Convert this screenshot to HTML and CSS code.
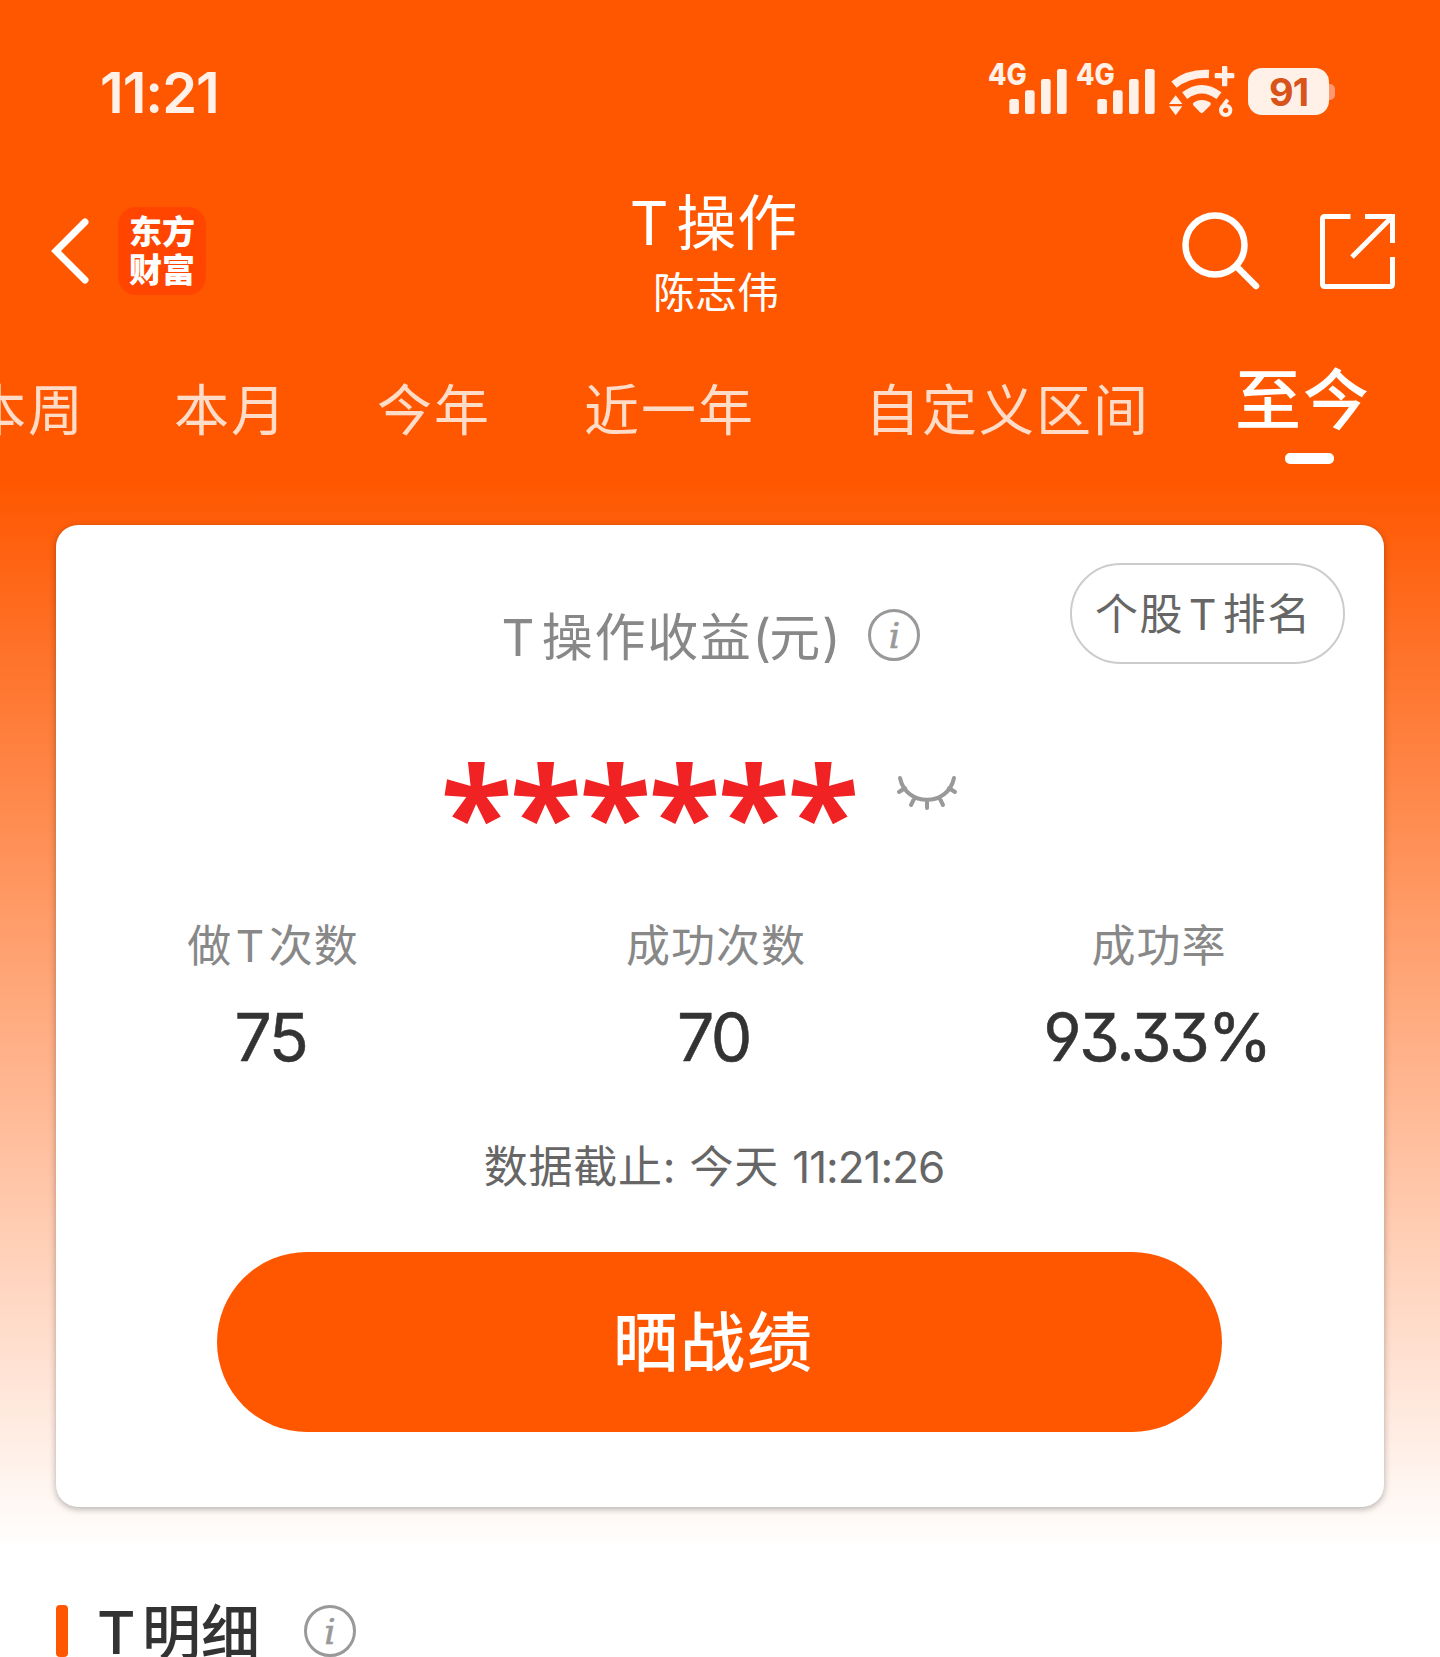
FILE: index.html
```html
<!DOCTYPE html>
<html lang="zh-CN">
<head>
  <meta charset="UTF-8">
  <title>T操作</title>
  <meta name="viewport" content="width=device-width, initial-scale=1.0">
  <link rel="stylesheet" href="styles.css">
</head>
<body>
  <div class="status-bar">
    <span class="time">11:21</span>
    <div class="status-icons">
      <svg class="signal" viewBox="50 36 240 168">
        <text x="50" y="104" textLength="116" lengthAdjust="spacingAndGlyphs">4G</text>
        <rect x="114" y="147" width="29" height="45" rx="7"/>
        <rect x="161" y="121" width="29" height="71" rx="7"/>
        <rect x="209" y="87" width="29" height="105" rx="7"/>
        <rect x="257" y="57" width="29" height="135" rx="7"/>
      </svg>
      <svg class="signal" viewBox="50 36 240 168">
        <text x="50" y="104" textLength="116" lengthAdjust="spacingAndGlyphs">4G</text>
        <rect x="114" y="147" width="29" height="45" rx="7"/>
        <rect x="161" y="121" width="29" height="71" rx="7"/>
        <rect x="209" y="87" width="29" height="105" rx="7"/>
        <rect x="257" y="57" width="29" height="135" rx="7"/>
      </svg>
      <svg class="wifi" viewBox="590 36 204 168">
        <path d="M608 104 Q650 69 713 72" class="arc"/>
        <path d="M640 137 Q691 98 743 137" class="arc"/>
        <path d="M668 157 Q691 143 716 157 Q721 161 717 166 L696 187 Q691 192 686 187 L666 166 Q662 161 668 157 Z"/>
        <path d="M613 136 L633 162 H593 Z M593 169 H633 L613 196 Z"/>
        <path d="M753 48 h12 q3 0 3 3 v18 h18 q3 0 3 3 v10 q0 3 -3 3 h-18 v21 q0 3 -3 3 h-10 q-3 0 -3 -3 v-21 h-19 q-3 0 -3 -3 v-10 q0 -3 3 -3 h19 v-18 q0 -3 3 -3 Z"/>
        <path d="M769 149 L751 174" class="six"/>
        <circle cx="763" cy="181" r="14" class="six"/>
      </svg>
      <div class="battery"><span>91</span></div>
    </div>
  </div>

  <header class="header">
    <div class="header-left">
      <svg class="back" viewBox="0 0 40 68"><path d="M34 5 L5 34 L34 63"/></svg>
      <div class="logo"><span>东方</span><span>财富</span></div>
    </div>
    <div class="header-title">
      <h1><span class="t">T</span>操作</h1>
      <p>陈志伟</p>
    </div>
    <div class="header-right">
      <svg class="search" viewBox="0 0 79 79"><circle cx="33" cy="33" r="29.5"/><path d="M55 55 L74 74"/></svg>
      <svg class="share" viewBox="0 0 75 75">
        <path d="M30.500 2.500 H5 Q2.500 2.500 2.500 5 V70 Q2.500 72.500 5 72.500 H70 Q72.500 72.500 72.500 70 V43"/>
        <path d="M45 2.500 H72.500 V29 M72 3 L32 43"/>
      </svg>
    </div>
  </header>

  <nav class="tabs">
    <a class="tab">本周</a>
    <a class="tab">本月</a>
    <a class="tab">今年</a>
    <a class="tab tab-year">近一年</a>
    <a class="tab tab-custom">自定义区间</a>
    <a class="tab tab-active">至今</a>
  </nav>

  <section class="card">
    <a class="rank-btn">个股<span class="t t-mid">T</span>排名</a>
    <div class="profit-label">
      <span><span class="t">T</span>操作收益<span class="paren">(</span>元<span class="paren">)</span></span>
      <i class="info">i</i>
    </div>
    <div class="profit">
      <span class="stars">******</span>
      <svg class="eye" viewBox="0 0 60 36">
        <path d="M3 3 C9 32 51 32 57 3 M8 13 L2 17 M18 22 L14 30 M30 25 V33 M42 22 L46 30 M52 13 L58 17"/>
      </svg>
    </div>
    <div class="stats">
      <div class="stat"><span class="stat-label">做<span class="t t-mid">T</span>次数</span><span class="stat-value">75</span></div>
      <div class="stat"><span class="stat-label">成功次数</span><span class="stat-value">70</span></div>
      <div class="stat"><span class="stat-label">成功率</span><span class="stat-value">93.33%</span></div>
    </div>
    <p class="deadline">数据截止: 今天 <span>11:21:26</span></p>
    <button class="show-btn">晒战绩</button>
  </section>

  <div class="section-title">
    <span class="bar"></span>
    <h2><span class="t">T</span>明细</h2>
    <i class="info">i</i>
  </div>
</body>
</html>
```
FILE: styles.css
```css
* {
  box-sizing: border-box;
  margin: 0;
  padding: 0;
}

body {
  height: 1657px;
  overflow: hidden;
  font-family: Inter, "Noto Sans CJK SC", sans-serif;
  background: linear-gradient(to bottom, #ff5700 480px, #fff 1550px);
}

svg {
  display: block;
  flex: none;
  overflow: visible;
}

/* Breathing room between the latin T and the characters around it */
.t {
  margin-right: 0.11em;
}

.t-mid {
  margin-left: 0.11em;
}

/* Status bar */
.status-bar {
  display: flex;
  justify-content: space-between;
  height: 186px;
  padding: 62px 105px 0 100px;
  color: #fff0e8;
}

.time {
  font-size: 56px;
  font-weight: 600;
  line-height: 62px;
  letter-spacing: -1px;
}

.status-icons {
  display: flex;
  height: 56px;
  fill: #fff0e8;
}

.signal {
  width: 80px;
  height: 56px;
  margin-right: 8px;
}

.signal text {
  font-size: 88px;
  font-weight: 800;
}

.wifi {
  width: 68px;
  height: 56px;
  margin: 0 12px 0 4px;
}

.arc {
  fill: none;
  stroke: #fff0e8;
  stroke-width: 25;
}

.six {
  fill: none;
  stroke: #fff0e8;
  stroke-width: 12;
}

.battery {
  position: relative;
  width: 81px;
  height: 47px;
  margin: 6px 6px 0 0;
  border-radius: 14px;
  background: #fff0e8;
  color: #d8541a;
  font-size: 38px;
  font-weight: 700;
  line-height: 48px;
  letter-spacing: -1px;
  text-align: center;
}

.battery::after {
  content: "";
  position: absolute;
  left: 81px;
  top: 16px;
  width: 6px;
  height: 16px;
  border-radius: 0 5px 5px 0;
  background: #ff9770;
}

/* Header */
.header {
  display: grid;
  grid-template-columns: 1fr auto 1fr;
  align-items: center;
  height: 132px;
  padding: 0 45px 0 51px;
  color: #fff;
}

.header-left,
.header-right {
  display: flex;
  align-items: center;
  padding-bottom: 2px;
}

.header-right {
  justify-content: flex-end;
  gap: 59px;
}

.back {
  width: 40px;
  height: 68px;
  margin-right: 27px;
}

.back path,
.search,
.share {
  fill: none;
  stroke: #fff;
  stroke-width: 7;
  stroke-linecap: round;
}

.logo {
  display: flex;
  flex-direction: column;
  align-items: center;
  justify-content: center;
  width: 88px;
  height: 88px;
  border-radius: 18px;
  background: #ff4500;
  font-size: 33px;
  font-weight: 900;
  line-height: 38px;
}

.header-title {
  padding: 5px 14px 0 0;
  text-align: center;
}

.header-title h1 {
  padding-right: 4px;
  font-size: 60px;
  font-weight: 400;
  line-height: 64px;
  letter-spacing: 1px;
}

.header-title p {
  margin-top: 13px;
  font-size: 42px;
  line-height: 50px;
}

.search {
  width: 79px;
  height: 79px;
  stroke-width: 6.5;
}

.share {
  width: 75px;
  height: 75px;
  stroke-width: 5;
  stroke-linecap: butt;
}

/* Period tabs */
.tabs {
  display: flex;
  gap: 89px;
  height: 207px;
  margin-left: -29px;
  padding-top: 52px;
  white-space: nowrap;
}

.tab {
  flex: none;
  color: #ffdcc8;
  font-size: 55px;
  line-height: 80px;
  letter-spacing: 2px;
}

.tab-year {
  margin-left: 4px;
}

.tab-custom {
  margin-left: 21px;
}

.tab-active {
  position: relative;
  margin: -10px 0 0 -4px;
  color: #fff;
  font-size: 66px;
  font-weight: 500;
}

.tab-active::after {
  content: "";
  position: absolute;
  left: 50px;
  top: 93px;
  width: 49px;
  height: 11px;
  border-radius: 5px;
  background: #fff;
}

/* Profit card */
.card {
  position: relative;
  width: 1328px;
  height: 982px;
  margin: 0 auto;
  padding: 79px 12px 0 0;
  border-radius: 22px;
  background: #fff;
  box-shadow: 0 2px 7px rgba(0, 0, 0, 0.3);
}

.rank-btn {
  position: absolute;
  top: 38px;
  right: 39px;
  width: 275px;
  height: 101px;
  padding-left: 23px;
  border: 2px solid #ccc;
  border-radius: 51px;
  color: #666;
  font-size: 43px;
  line-height: 99px;
  letter-spacing: 1.500px;
}

.profit-label {
  display: flex;
  align-items: center;
  justify-content: center;
  gap: 30px;
  height: 62px;
  padding: 0 6px 2px 0;
  color: #888;
  font-size: 51px;
  letter-spacing: 1.700px;
}

.paren {
  letter-spacing: -2px;
}

.info {
  width: 52px;
  height: 52px;
  border: 3px solid #999;
  border-radius: 50%;
  color: #999;
  font: italic 36px/48px "DejaVu Serif", serif;
  letter-spacing: 0;
  text-align: center;
  -webkit-text-stroke: 0.6px #999;
}

.profit-label .info {
  margin-top: 2px;
}

.profit {
  display: flex;
  align-items: flex-start;
  justify-content: center;
  height: 180px;
  padding: 60px 30px 0 0;
}

.stars {
  height: 120px;
  color: #f12224;
  font-family: "Open Sans", sans-serif;
  font-size: 132px;
  font-weight: 700;
  line-height: 173px;
  letter-spacing: -2.600px;
}

.eye {
  width: 60px;
  height: 36px;
  margin: 49px 0 0 41px;
  fill: none;
  stroke: #999;
  stroke-width: 4;
  stroke-linecap: round;
}

.stats {
  display: grid;
  grid-template-columns: repeat(3, 443px);
  margin-top: 72px;
}

.stat {
  display: flex;
  flex-direction: column;
  align-items: center;
  padding-right: 9px;
}

.stat-label {
  color: #888;
  font-size: 44px;
  line-height: 56px;
  letter-spacing: 1px;
}

.stat-label .t {
  margin: 0 0.08em;
}

.stat-value {
  margin: 23px 5px 0 0;
  color: #333;
  font-size: 66px;
  font-weight: 400;
  font-feature-settings: "cv09", "cv04", "cv03";
  line-height: 80px;
  letter-spacing: -2.500px;
  -webkit-text-stroke: 0.5px #333;
}

.deadline {
  margin-top: 60px;
  color: #666;
  font-size: 44px;
  line-height: 60px;
  letter-spacing: 0.800px;
  text-align: center;
}

.deadline span {
  letter-spacing: -1px;
}

.show-btn {
  display: block;
  width: 1005px;
  height: 180px;
  margin: 55px 0 0 161px;
  padding: 0 12px 8px 0;
  border: none;
  border-radius: 90px;
  background: #ff5700;
  color: #fff;
  font-family: inherit;
  font-size: 65px;
  font-weight: 500;
  letter-spacing: 2px;
}

/* Detail list title */
.section-title {
  display: flex;
  align-items: center;
  margin: 98px 0 0 56px;
  height: 52px;
}

.bar {
  width: 12px;
  height: 52px;
  margin-right: 29px;
  border-radius: 4px;
  background: #ff5700;
}

.section-title h2 {
  margin-right: 44px;
  padding-top: 4px;
  color: #333;
  font-size: 59px;
  font-weight: 500;
  line-height: 54px;
}
```
